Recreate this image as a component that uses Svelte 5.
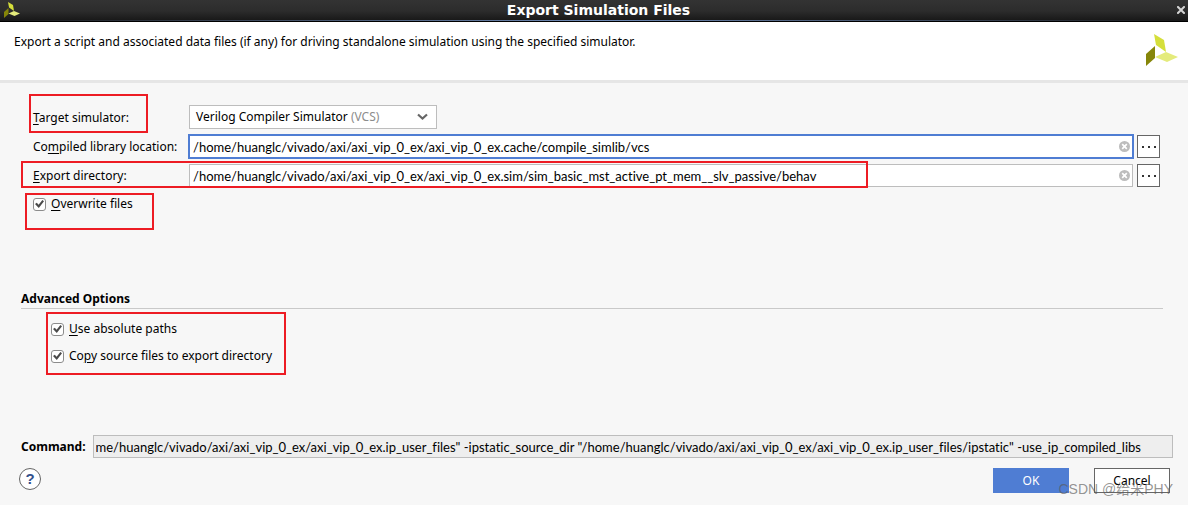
<script lang="ts">
  let simulator = 'vcs';
  let libraryPath = '/home/huanglc/vivado/axi/axi_vip_0_ex/axi_vip_0_ex.cache/compile_simlib/vcs';
  let exportPath =
    '/home/huanglc/vivado/axi/axi_vip_0_ex/axi_vip_0_ex.sim/sim_basic_mst_active_pt_mem__slv_passive/behav';
  let command =
    'me/huanglc/vivado/axi/axi_vip_0_ex/axi_vip_0_ex.ip_user_files" -ipstatic_source_dir "/home/huanglc/vivado/axi/axi_vip_0_ex/axi_vip_0_ex.ip_user_files/ipstatic" -use_ip_compiled_libs';
  let overwrite = true;
  let absolutePaths = true;
  let copySources = true;
</script>

{#snippet logo()}
  <svg class="logo" viewBox="0 0 32 32" aria-hidden="true">
    <path fill="#d5df3b" d="M8 0 18 6 20 18 10 11Z" />
    <path fill="#868609" d="M0 20 9 12V24L0 32Z" />
    <path fill="#e4eb7c" d="M9 23 20 18 32 23 21 28Z" />
  </svg>
{/snippet}

{#snippet clearIcon()}
  <svg width="11" height="11" viewBox="0 0 11 11">
    <circle cx="5.5" cy="5.5" r="5.5" fill="#bdbdbd" />
    <path d="M3.2 3.2 7.8 7.8M7.8 3.2 3.2 7.8" stroke="#fff" stroke-width="1.7" />
  </svg>
{/snippet}

<div class="dialog">
  <div class="titlebar">
    {@render logo()}
    <h1>Export Simulation Files</h1>
    <button class="close" aria-label="Close">
      <svg width="8" height="8" viewBox="0 0 8 8">
        <path d="M1 1 7 7M7 1 1 7" stroke="#d4d4d4" stroke-width="2" stroke-linecap="square" />
      </svg>
    </button>
  </div>

  <header>
    <p>Export a script and associated data files (if any) for driving standalone simulation using the specified simulator.</p>
    {@render logo()}
  </header>

  <main>
    <div class="fields">
      <label for="simulator"><u>T</u>arget simulator:</label>
      <div class="combo">
        <select id="simulator" bind:value={simulator}>
          <option value="vcs">Verilog Compiler Simulator (VCS)</option>
        </select>
        <span class="combo-text" aria-hidden="true">Verilog Compiler Simulator <span>(VCS)</span></span>
        <svg width="11" height="8" viewBox="0 0 11 8">
          <path d="M1 1.5 5.5 5.5 10 1.5" fill="none" stroke="#666" stroke-width="2.2" />
        </svg>
      </div>

      <label for="library">Co<u>m</u>piled library location:</label>
      <div class="path-row">
        <div class="text-field active">
          <input id="library" type="text" bind:value={libraryPath} />
          <button class="clear" aria-label="Clear library location" on:click={() => (libraryPath = '')}>
            {@render clearIcon()}
          </button>
        </div>
        <button class="browse" aria-label="Browse for library location"><i></i><i></i><i></i></button>
      </div>

      <label for="export"><u>E</u>xport directory:</label>
      <div class="path-row">
        <div class="text-field">
          <input id="export" type="text" bind:value={exportPath} />
          <button class="clear" aria-label="Clear export directory" on:click={() => (exportPath = '')}>
            {@render clearIcon()}
          </button>
        </div>
        <button class="browse" aria-label="Browse for export directory"><i></i><i></i><i></i></button>
      </div>
    </div>

    <label class="check overwrite">
      <input type="checkbox" bind:checked={overwrite} />
      <span><u>O</u>verwrite files</span>
    </label>

    <section>
      <h2>Advanced Options</h2>
      <label class="check">
        <input type="checkbox" bind:checked={absolutePaths} />
        <span><u>U</u>se absolute paths</span>
      </label>
      <label class="check">
        <input type="checkbox" bind:checked={copySources} />
        <span>Co<u>p</u>y source files to export directory</span>
      </label>
    </section>
  </main>

  <div class="command">
    <label for="command">Command:</label>
    <input id="command" type="text" readonly value={command} />
  </div>

  <footer>
    <button class="help" aria-label="Help">?</button>
    <button class="ok">OK</button>
    <button class="cancel">Cancel</button>
  </footer>

  <div class="mark mark-simulator"></div>
  <div class="mark mark-export"></div>
  <div class="mark mark-overwrite"></div>
  <div class="mark mark-advanced"></div>
  <span class="watermark">CSDN @给米PHY</span>
</div>

<style>
  :global(body) {
    margin: 0;
    background: #f7f7f7;
  }

  .dialog {
    position: relative;
    min-height: 100vh;
    overflow: hidden;
    background: #f7f7f7;
    color: #000;
    font: 12px/16px 'Noto Sans', 'Open Sans', sans-serif;
  }

  .dialog * {
    box-sizing: border-box;
  }

  button,
  input,
  select {
    margin: 0;
    padding: 0;
    border: 0;
    border-radius: 0;
    color: inherit;
    font: inherit;
  }

  input[type='text'] {
    font: 13px/16px Lato, 'Noto Sans', sans-serif;
    font-variant-ligatures: none;
  }

  button {
    display: flex;
    align-items: center;
    justify-content: center;
    background: none;
  }

  u {
    text-underline-offset: 2px;
  }

  .titlebar {
    display: flex;
    align-items: center;
    height: 22px;
    padding: 0 3px 3px 4px;
    background:
      linear-gradient(90deg, #191919, #6f8bb8 50%, #191919) 0 20px / 100% 1px no-repeat,
      linear-gradient(#333 0, #2c2c2c 50%, #191919 20px, #000 21px);
  }

  .titlebar .logo {
    width: 16px;
    height: 16px;
  }

  h1 {
    flex: 1;
    margin: 0;
    color: #fff;
    font: bold 14px/18px 'DejaVu Sans', sans-serif;
    text-align: center;
  }

  .close {
    width: 8px;
    height: 16px;
  }

  header {
    display: flex;
    justify-content: space-between;
    height: 61px;
    padding: 12px 10px 0 14px;
    background: #fff;
    border-bottom: 3px solid #e6e6e6;
  }

  header p {
    margin: 0;
  }

  header .logo {
    width: 32px;
    height: 32px;
  }

  main {
    padding: 22px 25px 0 21px;
  }

  .fields {
    display: grid;
    grid-template-columns: 155px 1fr;
    row-gap: 4px;
    align-items: center;
    padding: 0 3px 0 12px;
  }

  .combo {
    display: grid;
    grid-template-columns: 1fr auto;
    align-items: center;
    width: 248px;
    height: 24px;
    margin: 0 0 1px 1px;
    background: #fff;
    border: 1px solid #bdbdbd;
  }

  .combo select {
    grid-area: 1 / 1 / 2 / 3;
    height: 22px;
    padding-left: 6px;
    appearance: none;
    background: none;
    color: transparent;
  }

  .combo option {
    color: #000;
  }

  .combo-text {
    grid-area: 1 / 1;
    padding-left: 6px;
    pointer-events: none;
  }

  .combo-text span {
    color: #8c8c8c;
  }

  .combo svg {
    grid-area: 1 / 2;
    margin-right: 8px;
    pointer-events: none;
  }

  .path-row {
    display: flex;
    align-items: center;
    gap: 3px;
    height: 25px;
  }

  .text-field {
    display: flex;
    flex: 1;
    align-items: center;
    height: 23px;
    margin: 0 1px;
    padding: 0 2px 0 3px;
    background: #fff;
    border: 1px solid #bdbdbd;
  }

  .text-field.active {
    height: 25px;
    margin: 0;
    border: 2px solid #4f7dd3;
  }

  .text-field input {
    flex: 1;
    min-width: 0;
    background: none;
    outline: 0;
  }

  .browse {
    gap: 4px;
    width: 23px;
    height: 23px;
    background: #fff;
    border: 1px solid #666;
  }

  .browse i {
    width: 2px;
    height: 2px;
    background: #333;
  }

  .check {
    display: flex;
    align-items: center;
    gap: 5px;
    width: fit-content;
  }

  .check input {
    display: grid;
    place-items: center;
    width: 13px;
    height: 13px;
    appearance: none;
    background: #fff;
    border: 1px solid #8c8c8c;
    border-radius: 3px;
  }

  .check input:checked::before {
    content: '';
    width: 9px;
    height: 8px;
    background: #4a4a4a;
    clip-path: polygon(0 50%, 20% 33%, 40% 58%, 82% 0, 100% 16%, 42% 100%);
  }

  .overwrite {
    margin: 8px 0 0 12px;
  }

  section {
    margin-top: 78px;
  }

  section .check {
    margin: 11px 0 0 30px;
  }

  h2 {
    margin: 0 0 12px;
    border-bottom: 1px solid #c9c9c9;
    font: bold 12px/18px 'Noto Sans', sans-serif;
  }

  .command {
    display: flex;
    align-items: center;
    gap: 7px;
    margin-top: 71px;
    padding: 0 15px 0 21px;
  }

  .command label {
    font-weight: bold;
  }

  .command input {
    flex: 1;
    min-width: 0;
    height: 23px;
    padding: 0 2px;
    background: #eee;
    border: 1px solid #bdbdbd;
  }

  footer {
    display: flex;
    margin-top: 10px;
    padding: 0 18px 12px 19px;
  }

  .help {
    width: 22px;
    height: 22px;
    margin-right: auto;
    background: #fff;
    border: 1px solid #666;
    border-radius: 50%;
    color: #34508c;
    font: bold 15px/20px 'Liberation Sans', sans-serif;
  }

  .ok,
  .cancel {
    width: 76px;
    height: 25px;
  }

  .ok {
    margin-right: 25px;
    background: #4f7dd3;
    color: #fff;
  }

  .cancel {
    background: #fff;
    border: 1px solid #666;
  }

  .mark {
    position: absolute;
    border: 2px solid #ed1c24;
    pointer-events: none;
  }

  .mark-simulator {
    top: 94px;
    left: 29px;
    width: 119px;
    height: 39px;
  }

  .mark-export {
    top: 161px;
    left: 21px;
    width: 847px;
    height: 27px;
  }

  .mark-overwrite {
    top: 193px;
    left: 25px;
    width: 129px;
    height: 37px;
  }

  .mark-advanced {
    top: 312px;
    left: 46px;
    width: 240px;
    height: 63px;
  }

  .watermark {
    position: absolute;
    right: 15px;
    bottom: 6px;
    color: rgba(90, 90, 90, 0.65);
    font: 14px/20px 'Liberation Sans', 'Noto Sans CJK SC', sans-serif;
    pointer-events: none;
  }
</style>
